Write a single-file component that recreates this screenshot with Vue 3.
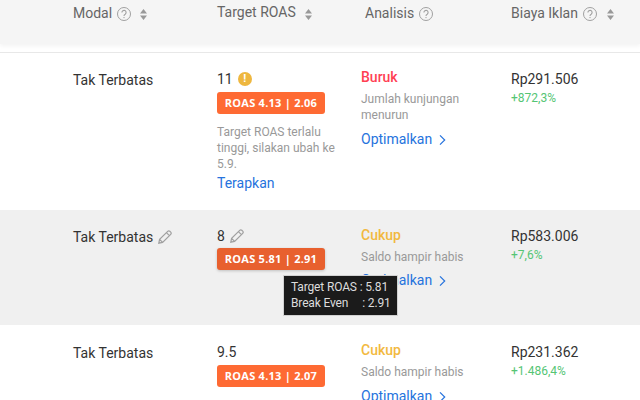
<script setup>
const rows = [
  {
    budget: 'Tak Terbatas', roas: '11', warn: true, badge: 'ROAS 4.13 | 2.06',
    note: 'Target ROAS terlalu tinggi, silakan ubah ke 5.9.', apply: true,
    level: 'Buruk', levelClass: 'bad', desc: 'Jumlah kunjungan menurun',
    cost: 'Rp291.506', delta: '+872,3%', cls: 'first',
  },
  {
    budget: 'Tak Terbatas', roas: '8', edit: true, badge: 'ROAS 5.81 | 2.91', tip: true,
    level: 'Cukup', levelClass: 'ok', desc: 'Saldo hampir habis',
    cost: 'Rp583.006', delta: '+7,6%', cls: 'hover',
  },
  {
    budget: 'Tak Terbatas', roas: '9.5', badge: 'ROAS 4.13 | 2.07',
    level: 'Cukup', levelClass: 'ok', desc: 'Saldo hampir habis',
    cost: 'Rp231.362', delta: '+1.486,4%', cls: 'last',
  },
]

const heads = [
  { label: 'Modal', help: true, sort: true },
  { label: 'Target ROAS', sort: true },
  { label: 'Analisis', help: true },
  { label: 'Biaya Iklan', help: true, sort: true },
]
</script>

<template>
  <div class="page">
    <div class="head">
      <div v-for="h in heads" :key="h.label" class="head-cell">
        <span class="head-label">{{ h.label }}</span>
        <svg v-if="h.help" class="help" viewBox="0 0 14 14" width="14" height="14">
          <circle cx="7" cy="7" r="6.5" fill="none" stroke="#a0a0a0" stroke-width="1" />
          <path d="M4.900 5.500a2.100 2.100 0 1 1 3.300 1.700c-.8.500-1.200.9-1.200 1.700" fill="none" stroke="#a0a0a0" stroke-width="1.100" />
          <circle cx="7" cy="10.600" r=".7" fill="#a0a0a0" />
        </svg>
        <svg v-if="h.sort" class="sort" viewBox="0 0 7 11" width="7" height="11">
          <path d="M3.500 0 7 4.500H0zM0 6.500h7L3.500 11z" fill="#999" />
        </svg>
      </div>
    </div>

    <div v-for="r in rows" :key="r.cost" class="row" :class="r.cls">
      <div class="cell budget">
        <span>{{ r.budget }}</span>
        <svg v-if="r.edit" class="pen" viewBox="0 0 14 14" width="14" height="14">
          <path d="M.8 13.200 1.600 9.400 9.700 1.300a1.500 1.500 0 0 1 2.100 0l.9.9a1.500 1.500 0 0 1 0 2.100L4.600 12.400zM8.400 2.600l3 3M1.600 9.400l3 3" fill="none" stroke="#a0a0a0" stroke-width="1.200" />
        </svg>
      </div>

      <div class="cell roas">
        <div class="value">
          <span>{{ r.roas }}</span>
          <span v-if="r.warn" class="warn">!</span>
          <svg v-if="r.edit" class="pen" viewBox="0 0 14 14" width="14" height="14">
            <path d="M.8 13.200 1.600 9.400 9.700 1.300a1.500 1.500 0 0 1 2.100 0l.9.9a1.500 1.500 0 0 1 0 2.100L4.600 12.400zM8.400 2.600l3 3M1.600 9.400l3 3" fill="none" stroke="#a0a0a0" stroke-width="1.200" />
          </svg>
        </div>
        <div class="badge-wrap">
          <span class="badge" :class="{ active: r.tip }">{{ r.badge }}</span>
          <div v-if="r.tip" class="tooltip">
            <div>Target ROAS : 5.81</div>
            <div>Break Even<span class="tip-gap">:</span> 2.91</div>
          </div>
        </div>
        <p v-if="r.note" class="note">{{ r.note }}</p>
        <a v-if="r.apply" class="link apply">Terapkan</a>
      </div>

      <div class="cell analysis">
        <div class="level" :class="r.levelClass">{{ r.level }}</div>
        <p class="desc">{{ r.desc }}</p>
        <a class="link more">
          Optimalkan
          <svg viewBox="0 0 7 12" width="7" height="12">
            <path d="M1 1.300 5.700 6 1 10.700" fill="none" stroke="#2673dd" stroke-width="1.200" />
          </svg>
        </a>
      </div>

      <div class="cell cost">
        <div class="amount">{{ r.cost }}</div>
        <div class="delta">{{ r.delta }}</div>
      </div>
    </div>
  </div>
</template>

<style>
html, body {
  margin: 0;
  overflow: hidden;
  background: #fff;
}
</style>

<style scoped>
.page {
  width: 640px;
  height: 400px;
  overflow: hidden;
  font-family: Roboto, "Liberation Sans", sans-serif;
  font-size: 14px;
  color: #333;
  background: #fff;
}

.head,
.row {
  display: grid;
  grid-template-columns: 144px 144px 150px 129px;
  padding-left: 73px;
}

.head {
  height: 44px;
  background: #f5f5f5;
  box-shadow: 0 2px 4px rgba(0, 0, 0, 0.05);
  margin-bottom: 8px;
  color: #666;
}

.head-cell {
  display: flex;
  align-items: center;
  align-self: start;
  height: 27px;
  line-height: 27px;
}

.head-cell:nth-child(2) .head-label {
  margin-top: -2px;
}

.head-cell:nth-child(3) {
  padding-left: 4px;
}

.help {
  margin-left: 5px;
}

.sort {
  margin-left: 9px;
  margin-top: 1px;
}

.head-cell:nth-child(4) .sort {
  margin-left: 10px;
}

.row {
  border-top: 1px solid #e8e8e8;
}

.row.first {
  height: 157px;
}

.row.hover {
  height: 115px;
  background: #f0f0f0;
  border-top: 0;
}

.row.last {
  height: 75px;
  border-top: 0;
}

.cell {
  padding-top: 18px;
}

.last .cell {
  padding-top: 19px;
}

.budget {
  display: flex;
  align-items: flex-start;
  gap: 5px;
  line-height: 18px;
}

.budget .pen {
  margin-top: 2px;
}

.row .roas,
.row .cost {
  padding-top: 17px;
}

.last .roas,
.last .cost {
  padding-top: 18px;
}

.value {
  display: flex;
  align-items: center;
  gap: 5px;
  height: 18px;
  line-height: 18px;
}

.warn {
  width: 14px;
  height: 14px;
  border-radius: 50%;
  background: #eeb73f;
  color: #fff;
  font-size: 11px;
  font-weight: 700;
  line-height: 14px;
  text-align: center;
}

.badge-wrap {
  position: relative;
  margin-top: 4px;
}

.hover .badge-wrap {
  margin-top: 3px;
}

.badge {
  display: block;
  box-sizing: border-box;
  width: 108px;
  height: 22px;
  border-radius: 3px;
  background: #fe6a33;
  color: #fff;
  font-family: "Open Sans", "Noto Sans", sans-serif;
  font-size: 11px;
  font-weight: 700;
  letter-spacing: 0.25px;
  line-height: 22px;
  text-align: center;
  white-space: nowrap;
}

.badge.active {
  background: #e8602e;
  box-shadow: 0 1px 3px rgba(0, 0, 0, 0.2);
}

.tooltip {
  position: absolute;
  left: 66px;
  top: 27px;
  z-index: 2;
  box-sizing: border-box;
  width: 115px;
  height: 41px;
  padding: 3px 7px;
  background: #1b1b1b;
  border: 1px solid #d2d2d2;
  color: #ddd;
  font-size: 12px;
  letter-spacing: -0.15px;
  line-height: 16px;
  white-space: nowrap;
}

.tip-gap {
  margin-left: 14px;
}

.note {
  margin: 10px 0 0;
  width: 128px;
  color: #999;
  font-size: 12px;
  line-height: 16px;
}

.link {
  color: #2673dd;
}

.apply {
  display: block;
  margin-top: 2px;
  line-height: 18px;
}

.row .analysis {
  padding-top: 16px;
}

.first .analysis {
  padding-top: 15px;
}

.level {
  font-size: 14px;
  font-weight: 500;
  line-height: 18px;
}

.level.bad {
  color: #ff4053;
}

.level.ok {
  color: #f2b93f;
}

.desc {
  margin: 5px 0 0;
  width: 118px;
  color: #999;
  font-size: 12px;
  line-height: 16px;
}

.more {
  display: flex;
  align-items: center;
  gap: 7px;
  margin-top: 6px;
  line-height: 18px;
}

.first .more,
.last .more {
  margin-top: 7px;
}

.more svg {
  margin-top: 1px;
}

.amount {
  line-height: 18px;
}

.delta {
  margin-top: 2px;
  color: #55c574;
  font-size: 12px;
  line-height: 16px;
}
</style>
